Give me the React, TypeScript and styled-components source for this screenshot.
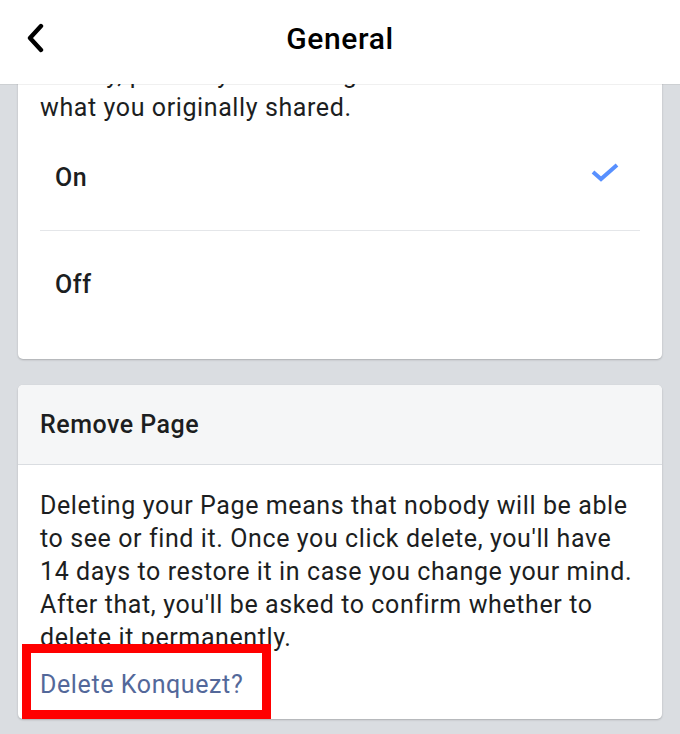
import styled, { createGlobalStyle } from "styled-components";

const GlobalStyle = createGlobalStyle`
  html, body {
    margin: 0;
    padding: 0;
    background: #dadde1;
  }
  body {
    font-family: Roboto, "Liberation Sans", Arial, sans-serif;
    color: #1c1e21;
    -webkit-font-smoothing: antialiased;
  }
`;

const Screen = styled.div`
  width: 680px;
  height: 734px;
  overflow: hidden;
  display: flex;
  flex-direction: column;
  background: #dadde1;
`;

const NavBar = styled.header`
  flex: none;
  height: 84px;
  background: #fff;
  display: grid;
  grid-template-columns: 84px 1fr 84px;
  align-items: center;
  box-shadow: 0 1px 0 rgba(0, 0, 0, 0.06);
  position: relative;
  z-index: 2;
`;

const BackButton = styled.button`
  border: 0;
  background: none;
  padding: 0 0 8px 24px;
  display: flex;
  align-items: center;
  cursor: pointer;
`;

const Title = styled.h1`
  margin: 0 0 8px;
  text-align: center;
  font-size: 30px;
  font-weight: 500;
  color: #000;
  letter-spacing: 0.6px;
`;

const Content = styled.main`
  flex: 1;
  overflow: hidden;
  padding: 0 18px;
  display: flex;
  flex-direction: column;
  gap: 26px;
`;

const Card = styled.section<{ $shift?: number }>`
  background: #fff;
  border-radius: 5px;
  box-shadow: 0 1px 2px rgba(0, 0, 0, 0.22);
  margin-top: ${(p) => p.$shift ?? 0}px;
  position: relative;
`;

const Paragraph = styled.p<{ $top?: number }>`
  margin: 0;
  padding: ${(p) => p.$top ?? 0}px 22px 0;
  font-size: 25px;
  line-height: 33px;
  letter-spacing: 0.6px;
`;

const Line = styled.span`
  display: block;
  white-space: nowrap;
`;

const OptionList = styled.div`
  margin: 0 22px;
  padding-bottom: 22px;
`;

const Option = styled.div<{ $divider?: boolean }>`
  height: 106px;
  display: flex;
  align-items: center;
  justify-content: space-between;
  padding: 0 20px 0 15px;
  font-size: 25px;
  font-weight: 500;
  letter-spacing: 0.6px;
  border-top: ${(p) => (p.$divider ? "1px solid #e4e6e9" : "0")};
`;

const CheckMark = styled.span`
  display: flex;
  margin-top: -8px;
`;

const CardHeader = styled.div`
  height: 79px;
  background: #f5f6f7;
  border-radius: 5px 5px 0 0;
  border-bottom: 1px solid #dadde1;
  display: flex;
  align-items: center;
  padding: 0 22px;
  font-size: 25px;
  font-weight: 500;
  letter-spacing: 0.5px;
`;

const CardBody = styled.div`
  padding: 24px 0 18px;
`;

const DeleteLink = styled.a`
  display: block;
  margin-top: 14px;
  padding: 0 22px;
  font-size: 25px;
  line-height: 33px;
  letter-spacing: 0.6px;
  color: #53689a;
  text-decoration: none;
`;

const Highlight = styled.div`
  position: absolute;
  left: 4px;
  bottom: 0;
  width: 249px;
  height: 75px;
  box-sizing: border-box;
  border: 9px solid #ff0000;
  pointer-events: none;
`;

function ChevronLeft() {
  return (
    <svg width="22" height="30" viewBox="0 0 22 30">
      <polyline
        points="17,3 6,15 17,27"
        fill="none"
        stroke="#000"
        strokeWidth="4.4"
        strokeLinecap="round"
        strokeLinejoin="round"
      />
    </svg>
  );
}

function Check() {
  return (
    <svg width="30" height="22" viewBox="0 0 30 22">
      <polyline
        points="3,10 11,17 27,3"
        fill="none"
        stroke="#5890ff"
        strokeWidth="4"
        strokeLinejoin="miter"
      />
    </svg>
  );
}

export default function App() {
  return (
    <Screen>
      <GlobalStyle />
      <NavBar>
        <BackButton aria-label="Back">
          <ChevronLeft />
        </BackButton>
        <Title>General</Title>
        <span />
      </NavBar>
      <Content>
        <Card $shift={-42}>
          <Paragraph $top={16}>
            <Line>Mostly, photos you see might not look like</Line>
            <Line>what you originally shared.</Line>
          </Paragraph>
          <OptionList>
            <Option>
              <span>On</span>
              <CheckMark>
                <Check />
              </CheckMark>
            </Option>
            <Option $divider>
              <span>Off</span>
            </Option>
          </OptionList>
        </Card>
        <Card>
          <CardHeader>Remove Page</CardHeader>
          <CardBody>
            <Paragraph>
              <Line>Deleting your Page means that nobody will be able</Line>
              <Line>to see or find it. Once you click delete, you'll have</Line>
              <Line>14 days to restore it in case you change your mind.</Line>
              <Line>After that, you'll be asked to confirm whether to</Line>
              <Line>delete it permanently.</Line>
            </Paragraph>
            <DeleteLink href="#">Delete Konquezt?</DeleteLink>
          </CardBody>
          <Highlight />
        </Card>
      </Content>
    </Screen>
  );
}
